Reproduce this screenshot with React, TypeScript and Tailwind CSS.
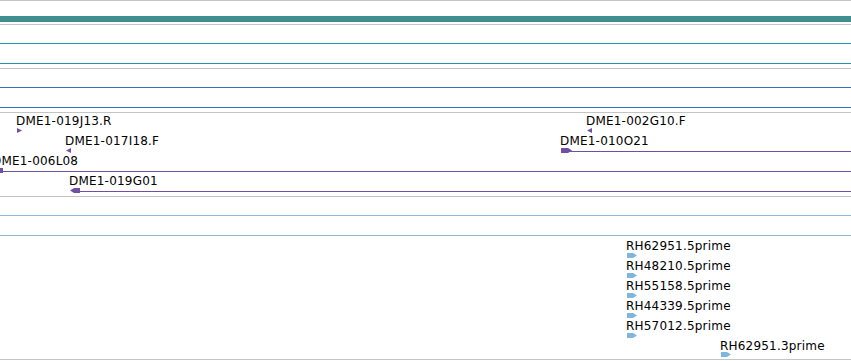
import React from "react";

const font = { fontFamily: '"DejaVu Sans", sans-serif' };

function Label({ x, y, text }: { x: number; y: number; text: string }) {
  return (
    <div
      className="absolute whitespace-nowrap text-[12px] leading-[12px] tracking-[0.2px] text-black"
      style={{ left: x, top: y }}
    >
      {text}
    </div>
  );
}

type Shape = "right" | "left" | "arrowRight" | "arrowLeft" | "box";

function Marker({ x, y, w, h, shape, color }: { x: number; y: number; w: number; h: number; shape: Shape; color: string }) {
  let pts = "";
  if (shape === "right") pts = `0,0 ${w},${h / 2} 0,${h}`;
  if (shape === "left") pts = `${w},0 0,${h / 2} ${w},${h}`;
  if (shape === "arrowRight") pts = `0,0 ${w - 4},0 ${w},${h / 2} ${w - 4},${h} 0,${h}`;
  if (shape === "arrowLeft") pts = `${w},0 4,0 0,${h / 2} 4,${h} ${w},${h}`;
  if (shape === "box") pts = `0,0 ${w},0 ${w},${h} 0,${h}`;
  return (
    <svg className="absolute" style={{ left: x, top: y }} width={w} height={h} viewBox={`0 0 ${w} ${h}`}>
      <polygon points={pts} fill={color} />
    </svg>
  );
}

function Line({ x, y, color }: { x: number; y: number; color: string }) {
  return <div className="absolute right-0 h-px" style={{ left: x, top: y, background: color }} />;
}

const purple = "#6e51a3";
const rhBlue = "#7fb6de";

const rhRows = ["RH62951.5prime", "RH48210.5prime", "RH55158.5prime", "RH44339.5prime", "RH57012.5prime"];

export default function App() {
  return (
    <div className="w-[851px] h-[361px] bg-white overflow-hidden flex flex-col" style={font}>
      <div className="h-px bg-[#c4c4c4]" />
      <div className="h-[15px]" />
      <div className="h-[6px] bg-[#408f90]" />
      <div className="h-[2px]" />
      <div className="h-px bg-[#c4c4c4]" />

      {/* track 1 */}
      <div className="h-[43px] flex flex-col pt-[18px] gap-[19px]">
        <div className="h-px bg-[#1f95b2]" />
        <div className="h-px bg-[#1f95b2]" />
      </div>
      <div className="h-px bg-[#c4c4c4]" />

      {/* track 2 */}
      <div className="h-[43px] flex flex-col pt-[18px] gap-[19px]">
        <div className="h-px bg-[#376dc0]" />
        <div className="h-px bg-[#376dc0]" />
      </div>
      <div className="h-px bg-[#c4c4c4]" />

      {/* track 3 */}
      <div className="relative h-[83px] overflow-hidden">
        <Label x={16} y={2} text="DME1-019J13.R" />
        <Marker x={17} y={15} w={5} h={5} shape="right" color={purple} />

        <Label x={65} y={22} text="DME1-017I18.F" />
        <Marker x={66} y={35} w={5} h={5} shape="left" color={purple} />

        <Label x={-8} y={42} text="DME1-006L08" />
        <Line x={0} y={58} color={purple} />
        <Marker x={0} y={55} w={3} h={5} shape="box" color={purple} />

        <Label x={69} y={62} text="DME1-019G01" />
        <Line x={75} y={78} color={purple} />
        <Marker x={70} y={75} w={10} h={5} shape="arrowLeft" color={purple} />

        <Label x={586} y={2} text="DME1-002G10.F" />
        <Marker x={587} y={15} w={5} h={5} shape="left" color={purple} />

        <Label x={560} y={22} text="DME1-010O21" />
        <Line x={565} y={38} color={purple} />
        <Marker x={561} y={35} w={11} h={5} shape="arrowRight" color={purple} />
      </div>
      <div className="h-px bg-[#c4c4c4]" />

      {/* track 4 */}
      <div className="h-[39px] flex flex-col pt-[18px] gap-[19px]">
        <div className="h-px bg-[#8bbadb]" />
        <div className="h-px bg-[#8bbadb]" />
      </div>

      {/* track 5 */}
      <div className="relative h-[123px]">
        {rhRows.map((t, i) => (
          <React.Fragment key={t}>
            <Label x={626} y={4 + i * 20} text={t} />
            <Marker x={627} y={17 + i * 20} w={10} h={5} shape="arrowRight" color={rhBlue} />
          </React.Fragment>
        ))}
        <Label x={720} y={104} text="RH62951.3prime" />
        <Marker x={721} y={116} w={10} h={5} shape="arrowRight" color={rhBlue} />
      </div>
      <div className="h-px bg-[#c4c4c4]" />
    </div>
  );
}
